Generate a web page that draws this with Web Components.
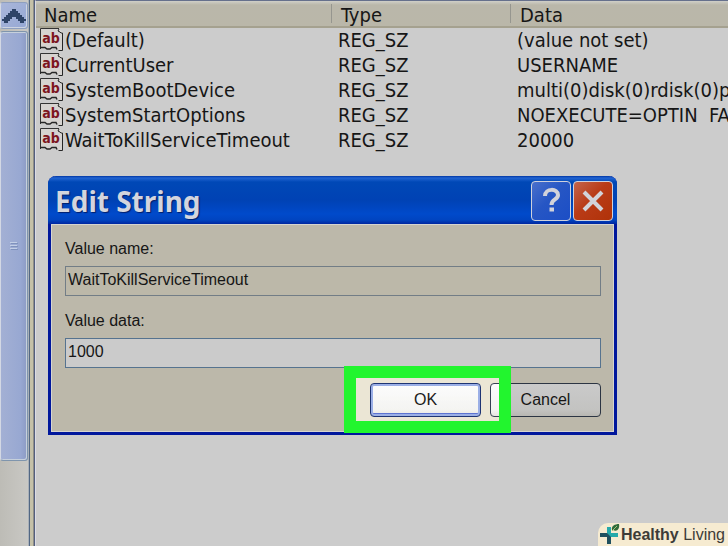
<!DOCTYPE html>
<html lang="en">
<head>
    <meta charset="UTF-8">
    <meta name="viewport" content="width=device-width, initial-scale=1.0">
    <title>Edit String</title>
    <style>
        body {
            margin: 0;
            height: 100vh;
            overflow: hidden;
            background: #cccccc;
            color: #161616;
        }
    </style>
</head>
<body>
    <script>
        customElements.define('scroll-bar', class extends HTMLElement {
            connectedCallback() {
                this.attachShadow({mode: 'open'});
                this.shadowRoot.innerHTML = `
                <style>
                    :host {
                        display: flex;
                        flex-direction: column;
                        gap: 2px;
                        padding-top: 2px;
                        box-sizing: border-box;
                        background: linear-gradient(90deg, #bdbcb6, #c9c8c4);
                    }
                    button {
                        display: flex;
                        align-items: center;
                        justify-content: center;
                        height: 27px;
                        padding: 0;
                        border: 1px solid #8e9fbf;
                        border-left: 1px solid #d3d8e4;
                        border-radius: 3px;
                        background: linear-gradient(135deg, #a9b6da, #96a8d4);
                        box-shadow: inset -1px -1px #cdd4e2;
                    }
                    .thumb {
                        display: flex;
                        align-items: center;
                        justify-content: center;
                        height: 428px;
                        border: 1px solid #7f95ad;
                        border-left-color: #d3d8e4;
                        border-radius: 3px;
                        background: linear-gradient(90deg, #a3b0d4, #98a8d2 75%, #8c9bc4);
                        box-shadow: inset -1px -1px #c6d0dc, inset 0 1px #c6d0dc;
                    }
                </style>
                <button aria-label="Scroll up">
                    <svg width="24" height="16" viewBox="0 0 24 16" shape-rendering="crispEdges">
                        <path d="M10 1h4v2h2v2h2v2h2v2h2v2h2v2h-2v2h-4v-2h-2v-2h-2v-2h-4v2H8v2H6v2H2v-2H0v-2h2V9h2V7h2V5h2V3h2z" fill="#2f4468"/>
                    </svg>
                </button>
                <div class="thumb">
                    <svg width="8" height="9" viewBox="0 0 8 9" shape-rendering="crispEdges">
                        <path d="M0 0h7v1H0zM0 3h7v1H0zM0 6h7v1H0z" fill="#c3cfe6"/>
                        <path d="M1 1h7v1H1zM1 4h7v1H1zM1 7h7v1H1z" fill="#7f92bd"/>
                    </svg>
                </div>`;
            }
        });

        customElements.define('string-icon', class extends HTMLElement {
            connectedCallback() {
                this.attachShadow({mode: 'open'});
                this.shadowRoot.innerHTML = `
                <style>
                    :host {
                        display: grid;
                        flex: none;
                        width: 24px;
                        height: 24px;
                    }
                    svg, span {
                        grid-area: 1 / 1;
                    }
                    span {
                        color: #7d1520;
                        font: bold 14px/21px "DejaVu Sans Condensed", "DejaVu Sans", sans-serif;
                        text-align: center;
                        padding-right: 2px;
                    }
                </style>
                <svg width="24" height="24" viewBox="0 0 24 24" fill="none">
                    <path d="M.5 .5h18l4 3v19h-3l-2-2h-4l-3 2-4-2h-6z" fill="#d6d3d0"/>
                    <path d="M.5 21V.5h18.500" stroke="#333"/>
                    <path d="M19 1l-1 2 2 1 1 1h1.500v17.500h-4" stroke="#262626"/>
                    <path d="M0 19.500h5l2 1.500h3l2-1.500h4l1 2" stroke="#262626" stroke-width="1.500"/>
                </svg>
                <span>ab</span>`;
            }
        });

        customElements.define('value-list', class extends HTMLElement {
            connectedCallback() {
                const rows = [
                    ['(Default)', '(value not set)'],
                    ['CurrentUser', 'USERNAME'],
                    ['SystemBootDevice', 'multi(0)disk(0)rdisk(0)p'],
                    ['SystemStartOptions', 'NOEXECUTE=OPTIN  FA'],
                    ['WaitToKillServiceTimeout', '20000']
                ];
                this.attachShadow({mode: 'open'});
                this.shadowRoot.innerHTML = `
                <style>
                    :host {
                        display: block;
                        overflow: hidden;
                        border-top: 1px solid #66708c;
                    }
                    table {
                        width: 100%;
                        table-layout: fixed;
                        border-collapse: collapse;
                        font: 20px/25px "DejaVu Sans Condensed", "Noto Sans", sans-serif;
                    }
                    th, td {
                        height: 25px;
                        padding: 0;
                        text-align: left;
                        font-weight: normal;
                        white-space: pre;
                    }
                    thead {
                        background: linear-gradient(#d0cfc8, #bab7aa 4px, #bab7a9);
                    }
                    th {
                        padding-left: 8px;
                        padding-top: 4px;
                        height: 21px;
                        line-height: 21px;
                        border-bottom: 2px solid #a5a18f;
                    }
                    th + th {
                        padding-left: 10px;
                        background: linear-gradient(#96968f, #96968f) 0 50% / 1px 19px no-repeat;
                    }
                    td + td {
                        padding-left: 7px;
                    }
                    .name {
                        width: 295px;
                    }
                    .type {
                        width: 179px;
                    }
                    .entry {
                        display: flex;
                        gap: 1px;
                        padding-left: 4px;
                    }
                </style>
                <table>
                    <colgroup><col class="name"><col class="type"><col></colgroup>
                    <thead>
                        <tr><th>Name</th><th>Type</th><th>Data</th></tr>
                    </thead>
                    <tbody>
                        ${rows.map(([name, data]) => `<tr><td><div class="entry"><string-icon></string-icon>${name}</div></td><td>REG_SZ</td><td>${data}</td></tr>`).join('')}
                    </tbody>
                </table>`;
            }
        });

        customElements.define('registry-view', class extends HTMLElement {
            connectedCallback() {
                this.attachShadow({mode: 'open'});
                this.shadowRoot.innerHTML = `
                <style>
                    :host {
                        display: grid;
                        grid-template-columns: 28px 7px 1fr;
                        height: 100%;
                    }
                    .splitter {
                        background: linear-gradient(90deg, #a9b0b8 1px, #526783 1px 2px, #c5c1a8 2px 5px, #8f8e88 5px 6px, #535f7e 6px);
                    }
                    value-list {
                        border-left: 1px solid #dcdce4;
                    }
                </style>
                <scroll-bar></scroll-bar>
                <div class="splitter"></div>
                <value-list></value-list>`;
            }
        });

        customElements.define('text-field', class extends HTMLElement {
            connectedCallback() {
                this.attachShadow({mode: 'open'});
                this.shadowRoot.innerHTML = `
                <style>
                    :host {
                        display: flex;
                        flex-direction: column;
                        gap: 7px;
                    }
                    label {
                        line-height: 20px;
                    }
                    input {
                        box-sizing: border-box;
                        width: 100%;
                        height: 30px;
                        margin: 0;
                        padding: 0 2px 2px;
                        border: 1px solid #56738f;
                        border-radius: 0;
                        outline: none;
                        background: #cbcbcb;
                        color: inherit;
                        font: inherit;
                    }
                    input:read-only {
                        border-color: #727d86;
                        background: #bcb8a9;
                    }
                </style>
                <label for="value"><slot></slot></label>
                <input id="value" type="text" value="${this.getAttribute('value')}" ${this.hasAttribute('readonly') ? 'readonly' : ''}>`;
            }
        });

        customElements.define('push-button', class extends HTMLElement {
            connectedCallback() {
                this.attachShadow({mode: 'open'});
                this.shadowRoot.innerHTML = `
                <style>
                    :host {
                        display: block;
                        width: 111px;
                    }
                    button {
                        display: block;
                        width: 100%;
                        height: 34px;
                        padding: 0 0 1px;
                        border: 1px solid #2c3543;
                        border-radius: 4px;
                        background: linear-gradient(#cacaca, #c3c3c1 80%, #b8b7b2);
                        color: inherit;
                        font: inherit;
                    }
                    :host([default]) button {
                        border-color: #182a5c;
                        box-shadow: inset 0 0 0 2px #7c8cb8, inset 0 -3px #4a5ca8;
                    }
                </style>
                <button><slot></slot></button>`;
            }
        });

        customElements.define('caption-button', class extends HTMLElement {
            connectedCallback() {
                const close = this.getAttribute('kind') === 'close';
                const icon = close
                    ? '<path d="M10 10L28 28M28 10L10 28" stroke-width="4"/>'
                    : '<path d="M13 14C13 6 26 6 26 13C26 18 19.500 17 19.500 23" stroke-width="4"/><path d="M17.500 25.500h4.500v4h-4.500z" fill="#d2d3da" stroke="none"/>';
                this.attachShadow({mode: 'open'});
                this.shadowRoot.innerHTML = `
                <style>
                    :host {
                        display: block;
                    }
                    button {
                        display: block;
                        width: 40px;
                        height: 40px;
                        padding: 0;
                        border: 1px solid #cfd1dc;
                        border-radius: 4px;
                        background: ${close
                            ? 'linear-gradient(135deg, #c4654c, #b93b17 45%, #b03209)'
                            : 'linear-gradient(135deg, #4a70cc, #2656c4 45%, #1c4ec6)'};
                    }
                </style>
                <button aria-label="${close ? 'Close' : 'Help'}">
                    <svg width="38" height="38" viewBox="0 0 38 38" fill="none" stroke="#d2d3da">${icon}</svg>
                </button>`;
            }
        });

        customElements.define('dialog-window', class extends HTMLElement {
            connectedCallback() {
                this.attachShadow({mode: 'open'});
                this.shadowRoot.innerHTML = `
                <style>
                    :host {
                        display: block;
                        box-sizing: border-box;
                        border: 3px solid #00179c;
                        border-top: 0;
                        border-radius: 8px 8px 0 0;
                        background: #bcb8aa;
                        font: 16px/20px "Liberation Sans", Arial, sans-serif;
                    }
                    header {
                        display: flex;
                        align-items: center;
                        gap: 2px;
                        height: 48px;
                        margin: 0 -3px;
                        padding: 2px 4px 0 7px;
                        box-sizing: border-box;
                        border-radius: 8px 8px 0 0;
                        background: linear-gradient(#0036a4, #2264d2 2px, #0048b6 6px, #0042b4 24px, #004acb 38px, #0044c0 44px, #0026a0);
                    }
                    h1 {
                        flex: 1;
                        margin: 0;
                        color: #d3d5de;
                        font: bold 28px/40px "Noto Sans", sans-serif;
                        text-shadow: 1px 1px 1px #001f6c;
                    }
                    .body {
                        display: flex;
                        flex-direction: column;
                        gap: 15px;
                        padding: 14px 12px 14px 13px;
                        border: 1px solid #d6d5d0;
                    }
                    .actions {
                        display: flex;
                        justify-content: flex-end;
                        gap: 9px;
                    }
                </style>
                <header>
                    <h1><slot name="title"></slot></h1>
                    <caption-button kind="help"></caption-button>
                    <caption-button kind="close"></caption-button>
                </header>
                <div class="body">
                    <slot></slot>
                    <div class="actions"><slot name="action"></slot></div>
                </div>`;
            }
        });

        // green frame that brightens whatever is inside it
        customElements.define('focus-frame', class extends HTMLElement {
            connectedCallback() {
                this.attachShadow({mode: 'open'});
                this.shadowRoot.innerHTML = `
                <style>
                    :host {
                        display: block;
                        box-sizing: border-box;
                        border: 12px solid #22f52e;
                        backdrop-filter: brightness(1.25);
                        pointer-events: none;
                    }
                </style>`;
            }
        });

        customElements.define('brand-badge', class extends HTMLElement {
            connectedCallback() {
                this.attachShadow({mode: 'open'});
                this.shadowRoot.innerHTML = `
                <style>
                    :host {
                        display: flex;
                        align-items: center;
                        gap: 1px;
                        height: 23px;
                        padding: 0 3px 0 2px;
                        border-radius: 10px 0 0 0;
                        background: #f6ebd1;
                        color: #3d3c38;
                        font: 16px/22px "Liberation Sans", Arial, sans-serif;
                    }
                </style>
                <svg width="20" height="22" viewBox="0 0 20 22">
                    <path d="M7 3h4v6h7v4h-7v7H7v-7H0V9h7z" fill="#26a9aa"/>
                    <path d="M0 9h7l4 4v7H7v-7H0z" fill="#20505e"/>
                    <path d="M12 6C11 2 15 0 19 0C20 5 17 8 13 6z" fill="#2f6b3a"/>
                    <path d="M12 7L17 2" stroke="#a9c47a"/>
                </svg>
                <span><b>Healthy</b> Living</span>`;
            }
        });

        customElements.define('desktop-page', class extends HTMLElement {
            connectedCallback() {
                this.attachShadow({mode: 'open'});
                this.shadowRoot.innerHTML = `
                <style>
                    :host {
                        display: block;
                        position: relative;
                        height: 100%;
                    }
                    dialog-window {
                        position: absolute;
                        left: 48px;
                        top: 176px;
                        width: 569px;
                    }
                    focus-frame {
                        position: absolute;
                        left: 344px;
                        top: 366px;
                        width: 167px;
                        height: 67px;
                    }
                    brand-badge {
                        position: absolute;
                        right: 0;
                        bottom: 0;
                    }
                </style>
                <registry-view></registry-view>
                <dialog-window>
                    <span slot="title">Edit String</span>
                    <text-field value="WaitToKillServiceTimeout" readonly>Value name:</text-field>
                    <text-field value="1000">Value data:</text-field>
                    <push-button slot="action" default>OK</push-button>
                    <push-button slot="action">Cancel</push-button>
                </dialog-window>
                <focus-frame></focus-frame>
                <brand-badge></brand-badge>`;
            }
        });
    </script>

    <desktop-page></desktop-page>
</body>
</html>
